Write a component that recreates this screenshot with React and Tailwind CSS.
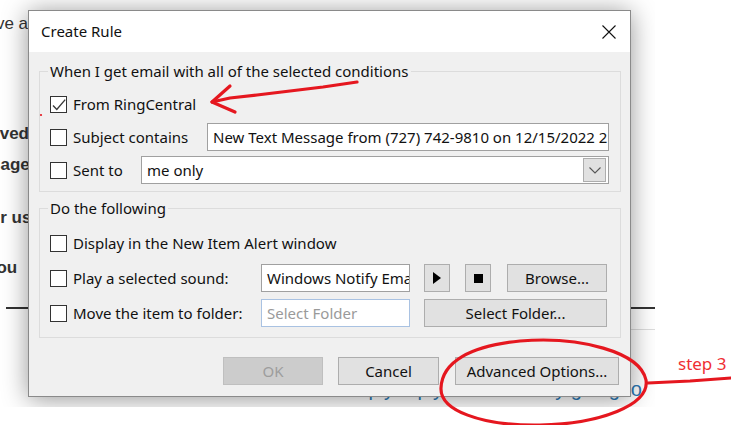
import React from "react";

function CheckBox({ checked = false }) {
  return (
    <svg width="17" height="17" viewBox="0 0 17 17" className="shrink-0">
      <rect x="0.5" y="0.5" width="16" height="16" fill="#ffffff" stroke="#333333" />
      {checked && (
        <path d="M3 9.6 L6.8 13.4 L15.2 3.6" fill="none" stroke="#3a3a3a" strokeWidth="1.4" />
      )}
    </svg>
  );
}

function WinButton({ children, className = "", disabled = false }) {
  return (
    <div
      className={
        "flex h-[28px] shrink-0 items-center justify-center border " +
        (disabled
          ? "border-[#bfbfbf] bg-[#cccccc] text-[#9d9d9d] "
          : "border-[#adadad] bg-[#e1e1e1] text-[#111111] ") +
        className
      }
    >
      {children}
    </div>
  );
}

function Option({ checked, label, className = "" }) {
  return (
    <div className={"flex shrink-0 items-center gap-[6px] " + className}>
      <CheckBox checked={checked} />
      <span className="whitespace-nowrap">{label}</span>
    </div>
  );
}

function CreateRuleDialog() {
  return (
    <div className="absolute left-[28px] top-[10px] flex h-[387px] w-[603px] flex-col border border-[#8a8a8a] bg-[#f0f0f0] font-['Noto_Sans',sans-serif] text-[15px] text-[#111111] shadow-[0_2px_24px_rgba(0,0,0,0.42)]">
      {/* title bar */}
      <div className="flex h-[41px] shrink-0 items-center justify-between bg-white pl-[12px] pr-[14px]">
        <span className="text-[15px] leading-none">Create Rule</span>
        <svg width="14" height="14" viewBox="0 0 14 14">
          <path d="M0.5 0.5 L13.5 13.5 M13.5 0.5 L0.5 13.5" stroke="#111111" strokeWidth="1.1" />
        </svg>
      </div>

      <div className="flex min-w-0 flex-1 flex-col pl-[10px] pr-[9px]">
        {/* conditions */}
        <fieldset className="mt-[9px] min-w-0 border border-[#dcdcdc] pb-[7px] pl-[10px] pr-[11px]">
          <legend className="-ml-[2px] px-[2px] leading-[20px]">
            When I get email with all of the selected conditions
          </legend>
          <div className="flex flex-col gap-[5px] pt-[9px]">
            <div className="flex h-[28px] items-center">
              <Option checked label="From RingCentral" />
            </div>
            <div className="flex h-[28px] items-center">
              <Option label="Subject contains" className="w-[157px]" />
              <div className="flex h-[28px] min-w-0 flex-1 items-center overflow-hidden whitespace-nowrap border border-[#a0a0a0] bg-white pl-[5px]">
                New Text Message from (727) 742-9810 on 12/15/2022 2:03 PM
              </div>
            </div>
            <div className="flex h-[28px] items-center">
              <Option label="Sent to" className="w-[91px]" />
              <div className="flex h-[28px] min-w-0 flex-1 items-center justify-between border border-[#a0a0a0] bg-white pl-[5px] pr-[2px]">
                <span>me only</span>
                <div className="flex h-[24px] w-[23px] items-center justify-center border border-[#adadad] bg-[#e1e1e1]">
                  <svg width="12" height="7" viewBox="0 0 12 7">
                    <path d="M0.5 0.5 L6 6 L11.5 0.5" fill="none" stroke="#555555" strokeWidth="1.1" />
                  </svg>
                </div>
              </div>
            </div>
          </div>
        </fieldset>

        {/* actions */}
        <fieldset className="mt-[6px] min-w-0 border border-[#dcdcdc] pb-[10px] pl-[10px] pr-[11px]">
          <legend className="-ml-[2px] px-[2px] leading-[20px]">Do the following</legend>
          <div className="flex flex-col gap-[7px] pt-[11px]">
            <div className="flex h-[28px] items-center">
              <Option label="Display in the New Item Alert window" />
            </div>
            <div className="flex h-[28px] items-center">
              <Option label="Play a selected sound:" className="w-[211px]" />
              <div className="flex h-[28px] w-[149px] shrink-0 items-center overflow-hidden whitespace-nowrap border border-[#a0a0a0] bg-white pl-[5px]">
                Windows Notify Email.wav
              </div>
              <WinButton className="ml-[14px] w-[26px]">
                <svg width="8" height="12" viewBox="0 0 8 12">
                  <path d="M0 0 L8 6 L0 12 Z" fill="#000000" />
                </svg>
              </WinButton>
              <WinButton className="ml-[15px] w-[26px]">
                <span className="block h-[9px] w-[9px] bg-black" />
              </WinButton>
              <WinButton className="ml-[16px] w-[100px]">Browse...</WinButton>
            </div>
            <div className="flex h-[28px] items-center">
              <Option label="Move the item to folder:" className="w-[211px]" />
              <div className="flex h-[28px] w-[149px] shrink-0 items-center border border-[#a9c2e2] bg-white pl-[5px] text-[#9a9a9a]">
                Select Folder
              </div>
              <WinButton className="ml-[14px] w-[183px]">Select Folder...</WinButton>
            </div>
          </div>
        </fieldset>

        {/* dialog buttons */}
        <div className="mt-[19px] flex justify-end pr-[2px]">
          <WinButton disabled className="w-[100px]">OK</WinButton>
          <WinButton className="ml-[15px] w-[101px]">Cancel</WinButton>
          <WinButton className="ml-[16px] w-[164px]">Advanced Options...</WinButton>
        </div>
      </div>
    </div>
  );
}

function Annotations() {
  return (
    <svg
      className="pointer-events-none absolute left-0 top-0"
      width="731"
      height="425"
      viewBox="0 0 731 425"
    >
      <g fill="none" stroke="#e5171f" strokeWidth="3.2" strokeLinecap="round" strokeLinejoin="round">
        <path d="M357 82 L323 87 L290 91 L257 95 L230 98 L212 102" />
        <path d="M230 86 L212 102 L235 112" />
        <path d="M520 341 C580 336 640 352 646 380 C650 405 600 424 540 425 C480 426 440 410 441 388 C442 362 470 346 520 341 Z" />
        <path d="M648 383 L690 381 L731 378" />
      </g>
      <circle cx="41" cy="115" r="1.1" fill="#e5171f" />
    </svg>
  );
}

export default function App() {
  return (
    <div className="relative h-[425px] w-[731px] overflow-hidden bg-white">
      {/* page captured behind the dialog */}
      <div className="relative h-[407px] w-[655px] overflow-hidden bg-white font-['Liberation_Sans',sans-serif] text-[#333333]">
        <div className="flex flex-col whitespace-nowrap">
          <div className="ml-[-23px] mt-[14px] text-[17px] leading-[20px]">have a new text message</div>
          <div className="ml-[-40px] mt-[90px] text-[17px] font-bold leading-[20px]">received</div>
          <div className="ml-[-43px] mt-[11px] text-[17px] font-bold leading-[20px]">message</div>
          <div className="ml-[-30px] mt-[33px] text-[17px] font-bold leading-[20px]">your usual</div>
          <div className="ml-[-13px] mt-[30px] text-[17px] font-bold leading-[20px]">you</div>
          <div className="ml-[6px] mt-[29px] h-[2px] w-[649px] bg-[#333333]" />
          <div className="ml-[300px] mt-[20px] h-[1px] w-[355px] bg-[#dddddd]" />
          <div className="mt-[47px] w-[642px] text-right text-[20px] leading-[24px] text-[#2b79b5]">
            Simply reply in Outlook by going to
          </div>
        </div>
        <CreateRuleDialog />
      </div>

      <Annotations />
      <div className="absolute left-[678px] top-[353px] font-['Noto_Sans',sans-serif] text-[17px] leading-[22px] text-[#ef2f33]">
        step 3
      </div>
    </div>
  );
}
